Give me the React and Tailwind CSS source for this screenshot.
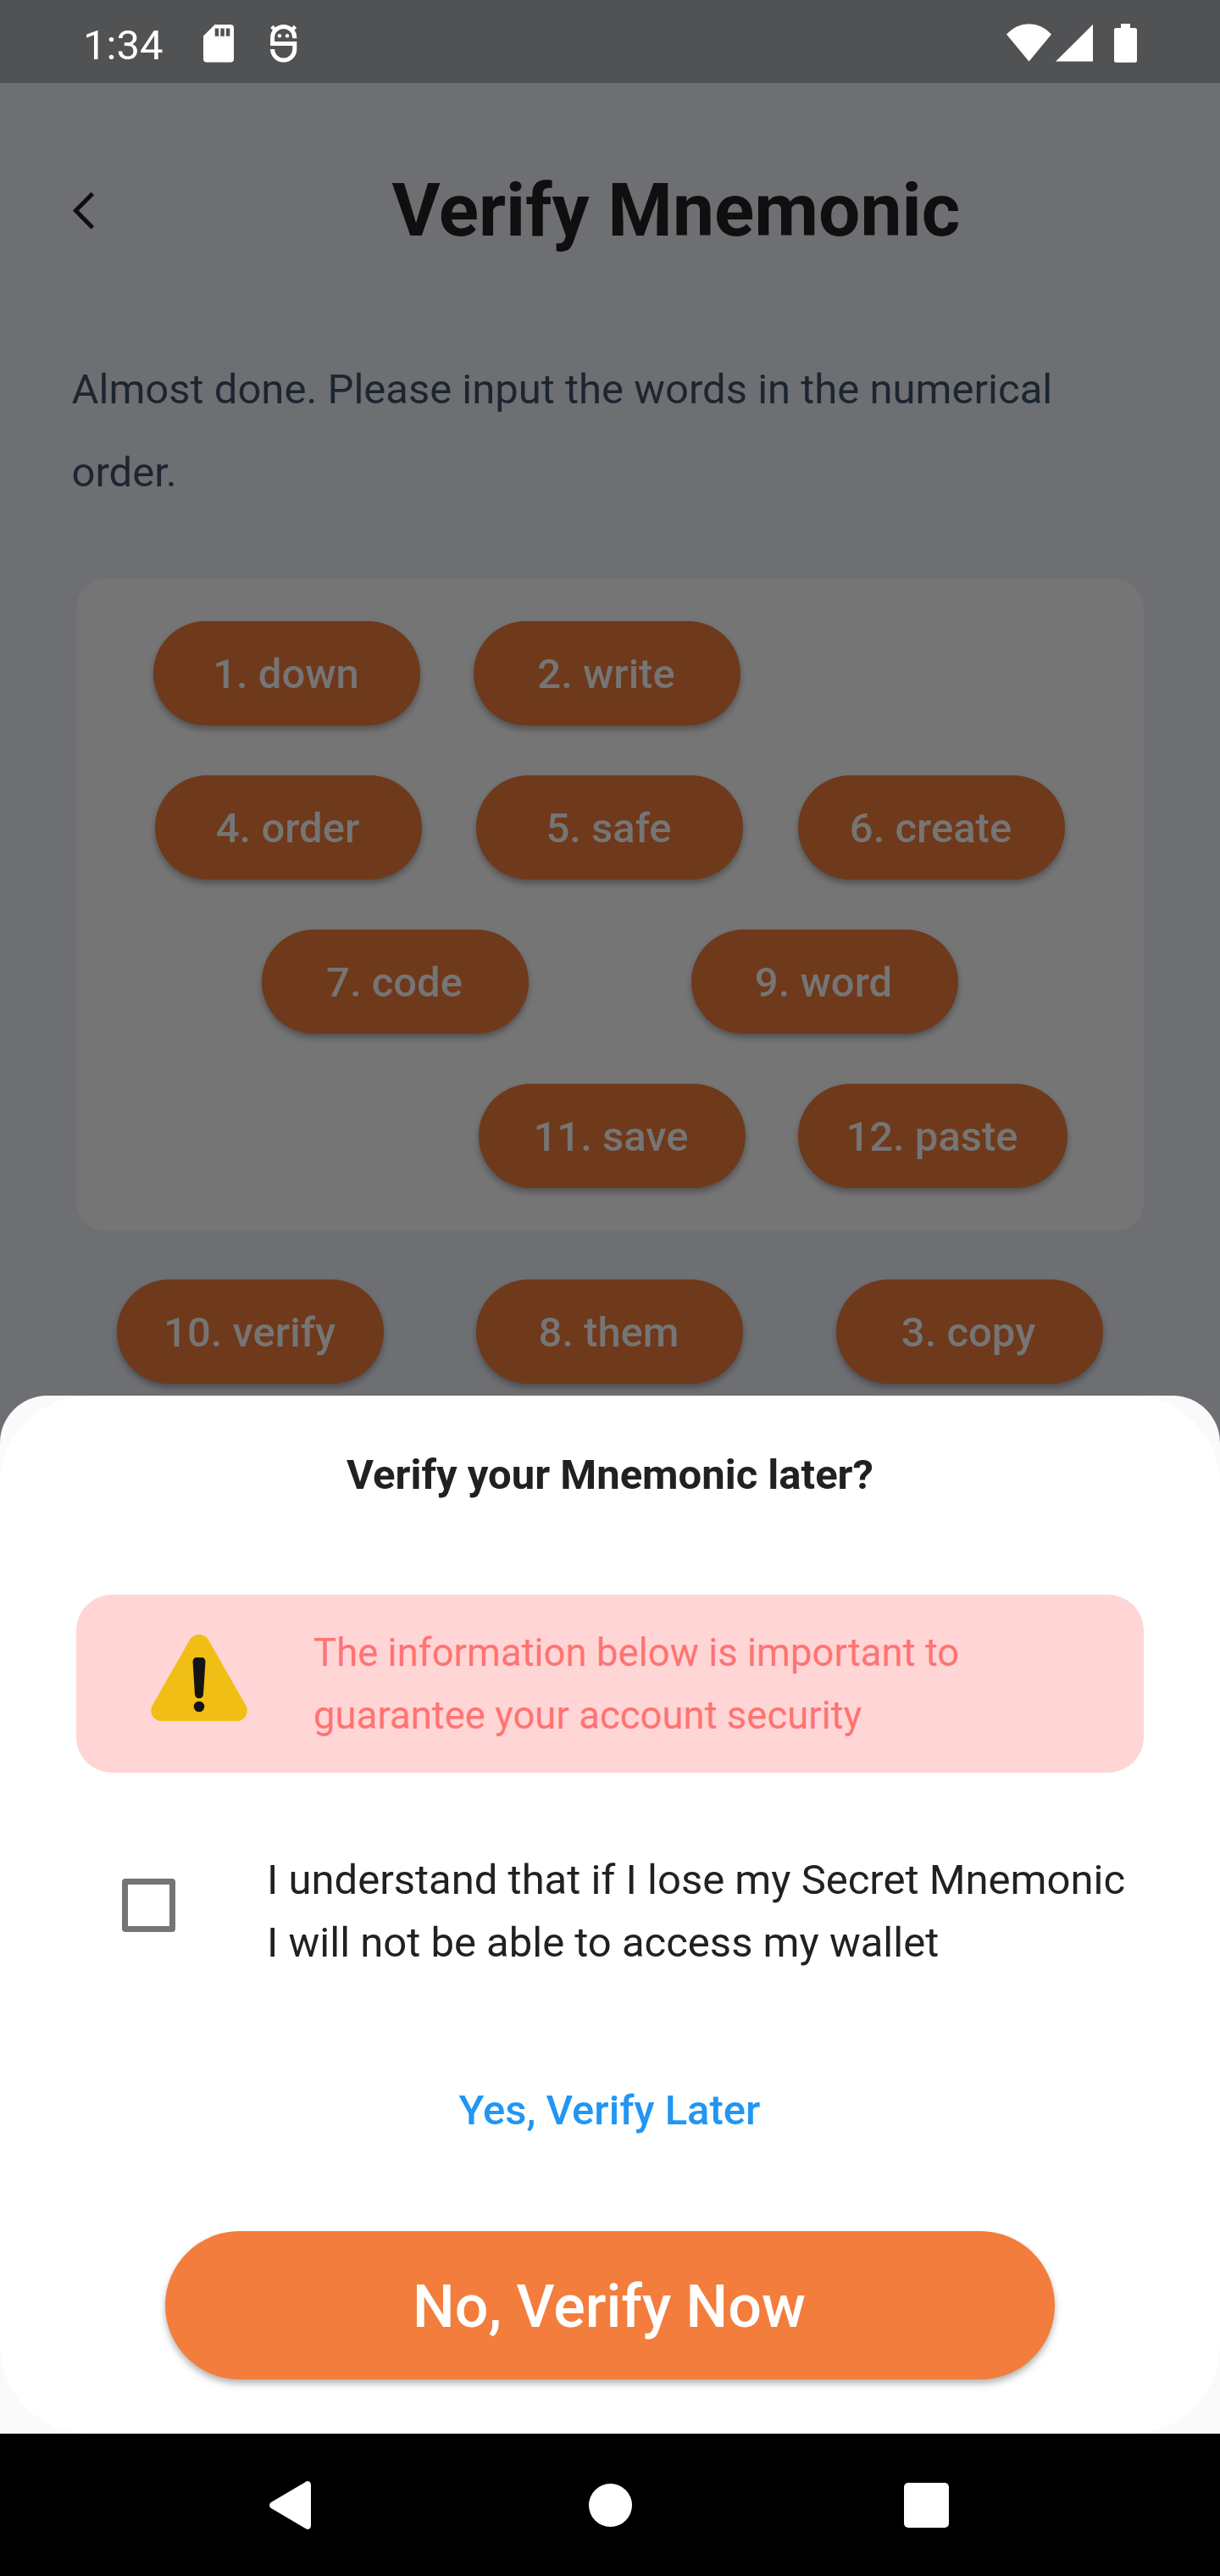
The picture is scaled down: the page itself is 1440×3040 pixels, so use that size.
import React from "react";

function Pill({ label, className = "" }) {
  return (
    <button
      className={`h-[122.5px] w-[315px] shrink-0 rounded-full bg-[#6f391b] pt-[2px] pr-[2px] text-center text-[49px] leading-none font-medium text-[#757575] shadow-[0_4px_7px_rgba(0,0,0,0.22),0_6px_10px_-2px_rgba(0,0,0,0.12)] ${className}`}
    >
      {label}
    </button>
  );
}

function StatusBar() {
  return (
    <div className="flex h-[98px] items-start bg-[#515254] pl-[98px] text-white">
      <span className="mt-[5px] w-[141.5px] text-[49px] leading-[98px]">1:34</span>
      <svg className="mt-[29px] h-[45px] w-[36px]" viewBox="0 0 36 45">
        <path
          fill="currentColor"
          fillRule="evenodd"
          d="M13.6 0H32a4 4 0 0 1 4 4V40.5a4 4 0 0 1-4 4H4a4 4 0 0 1-4-4V13.5ZM13.7 4.5V13.7H18.2V4.5ZM20.3 4.5V13.7H24.8V4.5ZM26.8 4.5V13.7H31.3V4.5Z"
        />
      </svg>
      <svg className="mt-[29px] ml-[43px] h-[45px] w-[32px] overflow-visible" viewBox="0 0 32 45" fill="none">
        <path
          stroke="currentColor"
          strokeWidth="5"
          d="M28.8 16.2V15.5A13.1 13 0 0 0 2.6 15.5V22.5H28.8V29A13.1 13 0 0 1 2.6 29"
        />
        <path stroke="currentColor" strokeWidth="4.5" d="M1.8 2.4L7 7.4M29.6 2.4L24.4 7.4" />
        <circle cx="10.9" cy="13.3" r="2.2" fill="currentColor" />
        <circle cx="20" cy="13.3" r="2.2" fill="currentColor" />
      </svg>
      <div className="mt-[28px] mr-[98px] ml-auto flex items-start">
        <svg className="h-[46px] w-[53px]" viewBox="0 0 53 46" fill="currentColor">
          <path d="M0 12.5A34.7 34.7 0 0 1 53 12.5L26.5 44.5Z" />
        </svg>
        <svg className="ml-[4.5px] h-[46px] w-[44.5px]" viewBox="0 0 44.5 46" fill="currentColor">
          <path d="M44.5 0.3V44.5H0Z" />
        </svg>
        <svg className="ml-[25px] h-[46px] w-[27px]" viewBox="0 0 27 46" fill="currentColor">
          <path d="M8 0H19V5H24.5A2.5 2.5 0 0 1 27 7.5V43.2A2.5 2.5 0 0 1 24.5 45.7H2.5A2.5 2.5 0 0 1 0 43.2V7.5A2.5 2.5 0 0 1 2.5 5H8Z" />
        </svg>
      </div>
    </div>
  );
}

function Header() {
  return (
    <div className="flex h-[300px] items-center pl-[85px]">
      <svg className="h-[44px] w-[28px]" viewBox="0 0 28 44" fill="none">
        <path stroke="#0f0f0f" strokeWidth="5" d="M24.3 2.4L4.4 22.6L24.3 42.8" />
      </svg>
      <h1 className="ml-[349.5px] text-[87.5px] leading-[104px] font-bold text-[#0f0f0f]">Verify Mnemonic</h1>
    </div>
  );
}

function WordBoard() {
  return (
    <div className="mx-[90px] mt-[75.5px] flex h-[770px] flex-col gap-[59.5px] rounded-[35px] bg-[#757575] pt-[50.5px]">
      <div className="flex pl-[91px]">
        <Pill label="1. down" />
        <Pill label="2. write" className="ml-[63px]" />
      </div>
      <div className="flex pl-[93px]">
        <Pill label="4. order" />
        <Pill label="5. safe" className="ml-[64px]" />
        <Pill label="6. create" className="ml-[65px]" />
      </div>
      <div className="flex pl-[219px]">
        <Pill label="7. code" />
        <Pill label="9. word" className="ml-[191.5px]" />
      </div>
      <div className="flex pl-[474.5px]">
        <Pill label="11. save" />
        <Pill label="12. paste" className="ml-[62.5px] w-[318px]" />
      </div>
    </div>
  );
}

function WarningIcon() {
  return (
    <svg className="mb-[14px] h-[102px] w-[114px] shrink-0" viewBox="0 0 114 102">
      <path
        fill="#f0be14"
        d="M45.8 6.6C50.3 -2.2 63.7 -2.2 68.2 6.6L112.4 84C116.4 92 111 102 102 102H12C3 102 -2.4 92 1.6 84Z"
      />
      <path
        fill="#141414"
        d="M49.6 32.5C49.4 29 51.5 27 54 27H60C62.5 27 64.6 29 64.4 32.5L62 70.5C61.8 73.5 59.8 75.3 57 75.3C54.2 75.3 52.2 73.5 52 70.5Z"
      />
      <circle cx="57" cy="85" r="6.3" fill="#141414" />
    </svg>
  );
}

function VerifyLaterSheet() {
  return (
    <div className="h-[1225px] rounded-t-[56px] bg-[#fafafa]">
      <div className="flex h-[1225px] flex-col rounded-[105px] bg-white">
        <h2 className="mt-[61px] text-center text-[49px] leading-[66px] font-bold text-[#212121]">
          Verify your Mnemonic later?
        </h2>
        <div className="mx-[90px] mt-[108px] flex h-[210px] items-center rounded-[42px] bg-[#ffd5d5] pl-[88px]">
          <WarningIcon />
          <p className="mt-[2px] ml-[78px] w-[800px] text-[45.5px] leading-[74px] text-[#ff7373]">
            The information below is important to guarantee your account security
          </p>
        </div>
        <label className="mt-[89.5px] flex h-[148px] items-center pl-[143.5px]">
          <span className="mt-[-14px] size-[63px] rounded-[4px] border-[7px] border-[#757575]" />
          <span className="ml-[108.5px] w-[1020px] text-[49px] leading-[74px] text-[#212121]">
            I understand that if I lose my Secret Mnemonic I will not be able to access my wallet
          </span>
        </label>
        <button className="mx-auto mt-[128.5px] h-[66px] pr-[1px] text-[49px] leading-[66px] font-medium text-[#2196f3]">
          Yes, Verify Later
        </button>
        <button className="mx-auto mt-[108.5px] h-[175px] w-[1050px] rounded-full bg-[#f37d3c] pt-[3px] pr-[2px] text-[70px] leading-none font-medium text-white shadow-[0_4px_7px_rgba(0,0,0,0.2),0_7px_12px_-2px_rgba(0,0,0,0.14)]">
          No, Verify Now
        </button>
      </div>
    </div>
  );
}

function NavigationBar() {
  return (
    <div className="flex h-[168px] items-center bg-black pl-[318px] text-white">
      <svg className="h-[57px] w-[49px]" viewBox="0 0 49 57" fill="currentColor">
        <path d="M42.3 1.2C45.3 -1.2 49 0.5 49 4.4V52.6C49 56.5 45.3 58.2 42.3 55.8L2 32C-0.5 30.2 -0.5 26.8 2 25Z" />
      </svg>
      <span className="ml-[327.5px] size-[51px] rounded-full bg-current" />
      <span className="ml-[321px] size-[53px] rounded-[5px] bg-current" />
    </div>
  );
}

export default function App() {
  return (
    <div className="h-[3040px] w-[1440px] overflow-hidden bg-[#6e6f73] font-['Roboto',sans-serif]">
      <div className="h-[1647px]">
        <StatusBar />
        <Header />
        <p className="mt-[13px] ml-[84.5px] w-[1260px] text-[49px] leading-[98px] text-[#1c2530]">
          Almost done. Please input the words in the numerical order.
        </p>
        <WordBoard />
        <div className="mt-[57.5px] flex pl-[138px]">
          <Pill label="10. verify" />
          <Pill label="8. them" className="ml-[109px]" />
          <Pill label="3. copy" className="ml-[109.5px]" />
        </div>
      </div>
      <VerifyLaterSheet />
      <NavigationBar />
    </div>
  );
}
